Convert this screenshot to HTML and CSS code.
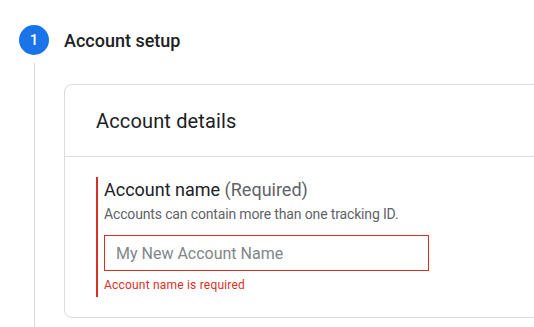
FILE: index.html
```html
<!DOCTYPE html>
<html lang="en">
<head>
<meta charset="utf-8">
<title>Account setup</title>
<link rel="stylesheet" href="styles.css">
</head>
<body>
<div class="stepper">
  <div class="step-head">
    <div class="step-num">1</div>
    <div class="step-title">Account setup</div>
  </div>
  <div class="step-body">
    <div class="card">
      <div class="card-head">Account details</div>
      <div class="card-body">
        <div class="field">
          <div class="field-label">Account name <span class="req">(Required)</span></div>
          <div class="field-desc">Accounts can contain more than one tracking ID.</div>
          <input class="field-input" type="text" placeholder="My New Account Name">
          <div class="field-error">Account name is required</div>
        </div>
      </div>
    </div>
  </div>
</div>
</body>
</html>
```
FILE: styles.css
```css
html, body {
  margin: 0;
  padding: 0;
  background: #fff;
  overflow: hidden;
}
body {
  font-family: Roboto, "Liberation Sans", sans-serif;
  color: #202124;
}
.stepper {
  padding: 25px 0 0 19px;
}
.step-head {
  display: flex;
  align-items: center;
  height: 30px;
}
.step-num {
  width: 30px;
  height: 30px;
  border-radius: 50%;
  background: #1a73e8;
  color: #fff;
  font-size: 15px;
  font-weight: 500;
  display: flex;
  align-items: center;
  justify-content: center;
}
.step-title {
  margin-left: 15px;
  font-size: 18px;
  font-weight: 500;
  color: #202124;
}
.step-body {
  margin: 8px 0 0 15px;
  border-left: 1px solid #dadce0;
  padding: 21px 0 40px 29px;
}
.card {
  width: 620px;
  border: 1px solid #dadce0;
  border-radius: 8px;
}
.card-head {
  height: 71px;
  border-bottom: 1px solid #dadce0;
  display: flex;
  align-items: center;
  padding-left: 31px;
  font-size: 20px;
  letter-spacing: 0.15px;
  color: #202124;
}
.card-body {
  padding: 20px 31px;
}
.field {
  border-left: 2px solid #d93025;
  padding: 1px 0 4px 6px;
}
.field-label {
  font-size: 18px;
  line-height: 24px;
  color: #202124;
}
.req {
  color: #5f6368;
}
.field-desc {
  margin-top: 2px;
  font-size: 14px;
  line-height: 20px;
  letter-spacing: -0.15px;
  color: #5f6368;
}
.field-input {
  display: block;
  margin: 11px 0 0;
  box-sizing: border-box;
  width: 325px;
  height: 36px;
  border: 1px solid #d93025;
  border-radius: 0;
  padding: 0 11px;
  font-family: Roboto, "Liberation Sans", sans-serif;
  font-size: 16px;
  color: #202124;
  background: #fff;
  outline: none;
}
.field-input::placeholder {
  color: #80868b;
}
.field-error {
  margin-top: 6px;
  font-size: 12px;
  line-height: 16px;
  letter-spacing: 0.2px;
  color: #d93025;
}
```
